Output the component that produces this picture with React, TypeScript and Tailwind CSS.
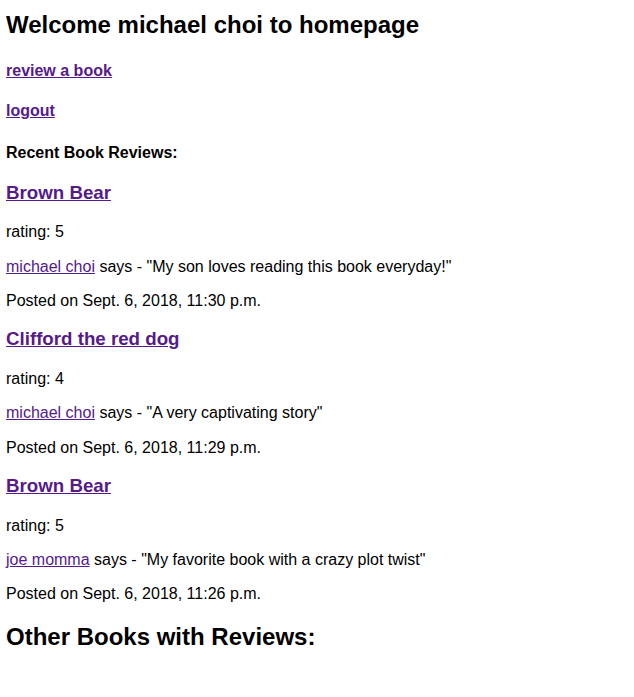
const reviews = [
  {
    book: "Brown Bear",
    rating: 5,
    user: "michael choi",
    text: "My son loves reading this book everyday!",
    posted: "Sept. 6, 2018, 11:30 p.m.",
  },
  {
    book: "Clifford the red dog",
    rating: 4,
    user: "michael choi",
    text: "A very captivating story",
    posted: "Sept. 6, 2018, 11:29 p.m.",
  },
  {
    book: "Brown Bear",
    rating: 5,
    user: "joe momma",
    text: "My favorite book with a crazy plot twist",
    posted: "Sept. 6, 2018, 11:26 p.m.",
  },
];

const link = "text-[#551a8b] underline";

const App = () => {
  return (
    <div className="min-h-[697px] bg-white pl-[6px] text-black font-['Liberation_Sans',Arial,sans-serif] text-[16px] leading-[1.15]">
      <h2 className="mt-[11px] mb-[23px] text-[24px] font-bold leading-[1.15]">
        Welcome michael choi to homepage
      </h2>
      <h4 className="my-[22px] text-[16px] font-bold">
        <a href="#" className={link}>review a book</a>
      </h4>
      <h4 className="my-[22px] text-[16px] font-bold">
        <a href="#" className={link}>logout</a>
      </h4>
      <h4 className="mt-[24px] mb-[19px] text-[16px] font-bold">Recent Book Reviews:</h4>
      {reviews.map((r, i) => (
        <div key={i}>
          <h3 className="mt-[18px] mb-[20px] text-[18.72px] font-bold leading-[1.15]">
            <a href="#" className={link}>{r.book}</a>
          </h3>
          <p className="my-[16px]">rating: {r.rating}</p>
          <p className="my-[16px]">
            <a href="#" className={link}>{r.user}</a> says - "{r.text}"
          </p>
          <p className="my-[16px]">Posted on {r.posted}</p>
        </div>
      ))}
      <h2 className="mt-[19px] text-[24px] font-bold leading-[1.15]">Other Books with Reviews:</h2>
    </div>
  );
};

export default App;
